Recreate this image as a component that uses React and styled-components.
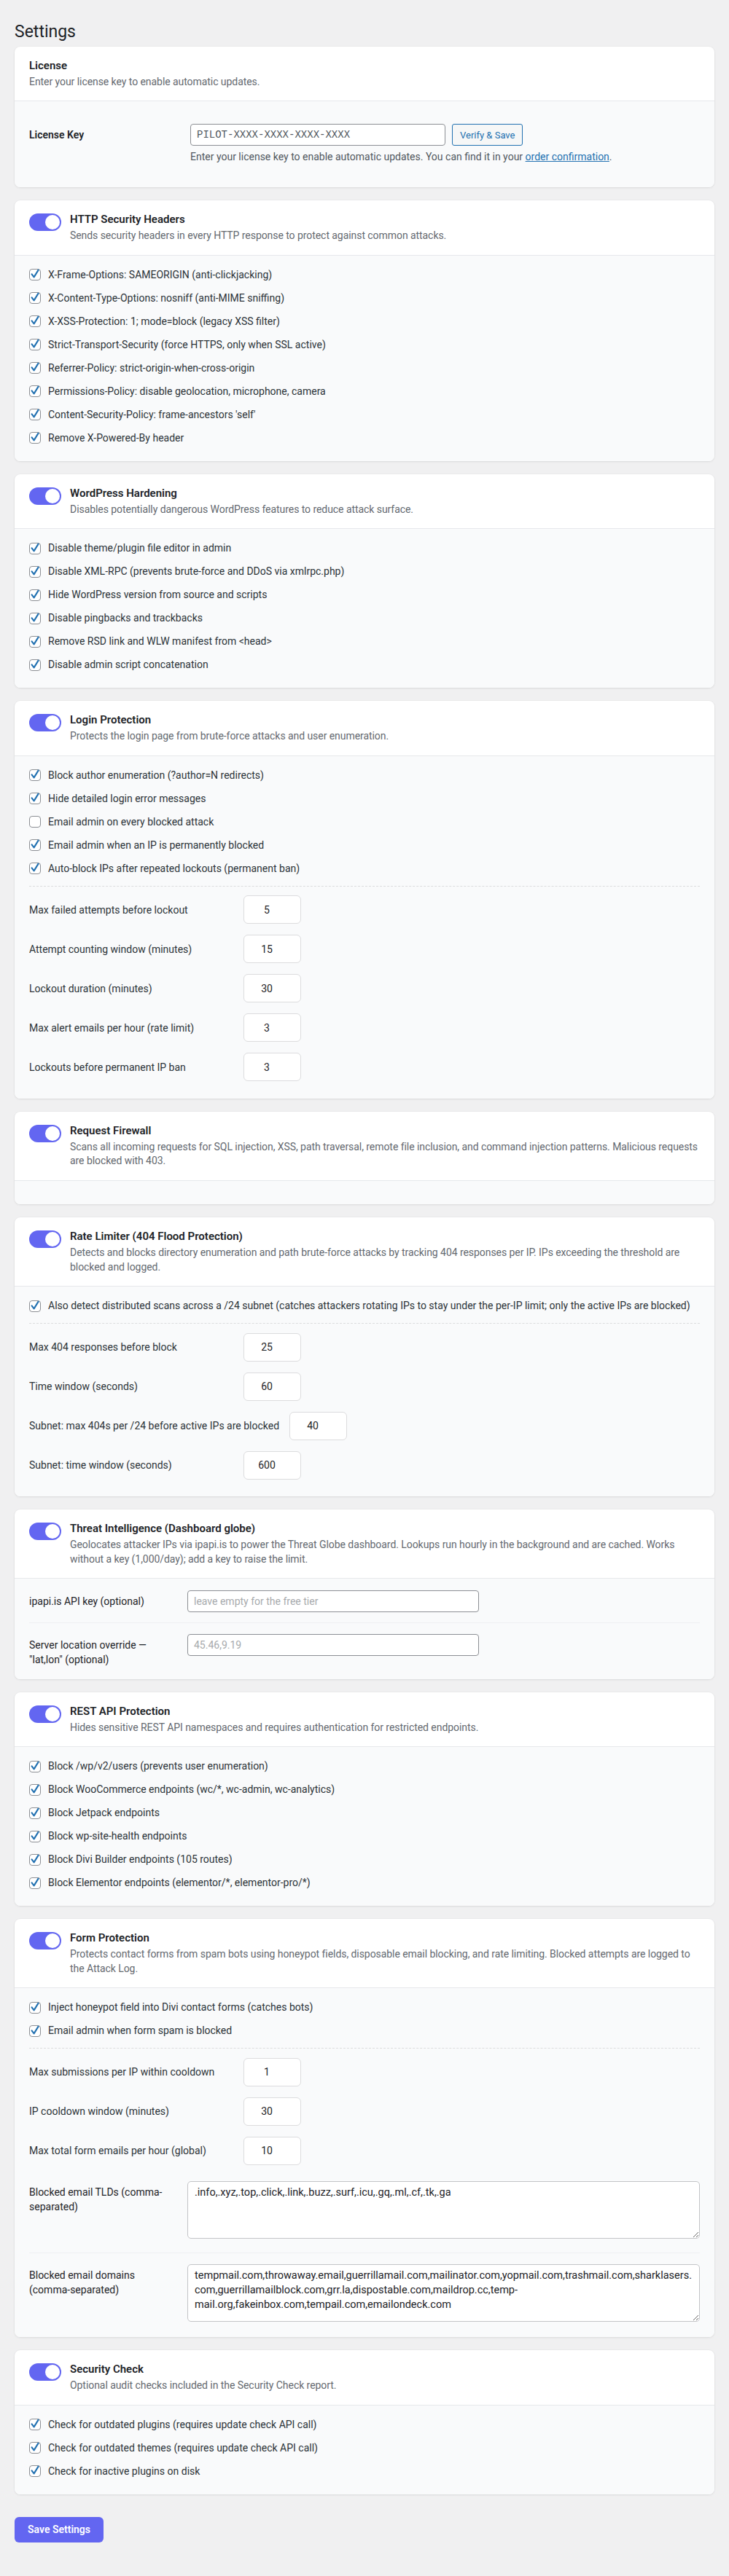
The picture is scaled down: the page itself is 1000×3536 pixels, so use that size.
import React from "react";
import styled, { createGlobalStyle } from "styled-components";

const GlobalStyle = createGlobalStyle`
  html, body {
    margin: 0;
    background: #f0f0f1;
  }
  body {
    font-family: Roboto, "Noto Sans", "Liberation Sans", sans-serif;
    color: #1d2327;
    font-size: 13px;
  }
  * {
    box-sizing: border-box;
  }
`;

const Wrap = styled.div`
  padding: 20px 20px 45px;
`;

const PageTitle = styled.h1`
  margin: 0;
  padding: 9px 0 5px;
  font-size: 23px;
  font-weight: 400;
  line-height: 1.3;
  color: #1d2327;
`;

const CardStack = styled.div`
  display: flex;
  flex-direction: column;
  gap: 18px;
`;

const Card = styled.section`
  background: #fff;
  border-radius: 8px;
  overflow: hidden;
  box-shadow: 0 1px 3px rgba(0, 0, 0, 0.08), 0 0 0 1px rgba(0, 0, 0, 0.02);
`;

const CardHeader = styled.div`
  display: flex;
  align-items: flex-start;
  gap: 12px;
  padding: 16px 20px;
  border-bottom: 1px solid #e6e8eb;
`;

const Toggle = styled.span`
  position: relative;
  flex: none;
  width: 44px;
  height: 24px;
  margin-top: 2px;
  border-radius: 12px;
  background: ${props => (props.on ? "#6366f1" : "#c3c4c7")};
  &::after {
    content: "";
    position: absolute;
    top: 2px;
    left: ${props => (props.on ? "22px" : "2px")};
    width: 20px;
    height: 20px;
    border-radius: 50%;
    background: #fff;
  }
`;

const HeaderText = styled.div`
  flex: 1;
  min-width: 0;
`;

const Title = styled.h2`
  margin: 0;
  font-size: 15px;
  font-weight: 600;
  line-height: 20px;
  color: #1d2327;
`;

const Desc = styled.p`
  margin: 3px 0 0;
  font-size: 14px;
  line-height: 1.4;
  letter-spacing: -0.06px;
  color: #646970;
`;

const CardBody = styled.div`
  background: #f9fafb;
  padding: 16px 20px;
`;

const CheckList = styled.div`
  display: flex;
  flex-direction: column;
  gap: 11px;
  padding-bottom: 5px;
`;

const CheckRow = styled.label`
  display: flex;
  align-items: center;
  gap: 10px;
  font-size: 14px;
  line-height: 21px;
  color: #2c3338;
`;

const Box = styled.span`
  flex: none;
  width: 16px;
  height: 16px;
  border: 1px solid #8c8f94;
  border-radius: 4px;
  background: #fff;
  display: flex;
  align-items: center;
  justify-content: center;
  svg {
    display: block;
    margin-top: -2px;
  }
`;

const DashedRule = styled.hr`
  margin: 8px 0 5px;
  border: 0;
  border-top: 1px dashed #dcdcde;
`;

const NumberRow = styled.div`
  display: flex;
  align-items: center;
  gap: 14px;
  padding: 7.5px 0;
`;

const NumberLabel = styled.span`
  min-width: 280px;
  font-size: 14px;
  line-height: 20px;
  color: #2c3338;
`;

const NumberInput = styled.input`
  width: 79px;
  height: 39px;
  padding: 0 23px 0 8px;
  border: 1px solid #dcdcde;
  border-radius: 6px;
  background: #fff;
  text-align: center;
  font: 14px Roboto, "Noto Sans", sans-serif;
  color: #1d2327;
`;

const FieldRow = styled.div`
  display: grid;
  grid-template-columns: 200px 1fr;
  column-gap: 17px;
  padding: 15px 0 14px;
  border-bottom: 1px solid #eef0f2;
  &:first-child {
    padding-top: 0;
  }
  &:last-child {
    border-bottom: none;
    padding-bottom: 0;
  }
`;

const FieldLabel = styled.label`
  padding-top: 6px;
  font-size: 14px;
  line-height: 1.4;
  color: #1d2327;
`;

const TextInput = styled.input`
  width: 400px;
  height: 30px;
  padding: 0 8px;
  border: 1px solid #8c8f94;
  border-radius: 4px;
  background: #fff;
  font: 14px Roboto, "Noto Sans", sans-serif;
  color: #2c3338;
  &::placeholder {
    color: #a7aaad;
  }
`;

const TextArea = styled.textarea`
  display: block;
  width: 100%;
  height: 79px;
  margin-bottom: 5px;
  padding: 5px 8px 5px 9px;
  border: 1px solid #c3c4c7;
  border-radius: 5px;
  background: #fff;
  font: 14.5px/20px Roboto, "Noto Sans", sans-serif;
  color: #1d2327;
`;

const LicenseRow = styled.div`
  display: grid;
  grid-template-columns: 221px 1fr;
  padding: 15px 0;
`;

const LicenseLabel = styled.label`
  padding-top: 5px;
  font-size: 14px;
  font-weight: 600;
  line-height: 20px;
  color: #1d2327;
`;

const InlineGroup = styled.div`
  display: flex;
  gap: 9px;
`;

const LicenseInput = styled.input`
  width: 350px;
  height: 30px;
  padding: 0 8px;
  border: 1px solid #8c8f94;
  border-radius: 4px;
  background: #fff;
  font: 14px "Liberation Mono", "DejaVu Sans Mono", monospace;
  color: #50575e;
  &::placeholder {
    color: #50575e;
  }
`;

const SecondaryButton = styled.button`
  height: 30px;
  padding: 0 10px;
  border: 1px solid #2271b1;
  border-radius: 3px;
  background: #f6f7f7;
  color: #2271b1;
  font: 13px Roboto, "Noto Sans", sans-serif;
  cursor: pointer;
`;

const Help = styled.p`
  margin: 6px 0 0;
  font-size: 14px;
  line-height: 1.4;
  color: #50575e;
  a {
    color: #2271b1;
  }
`;

const SaveButton = styled.button`
  margin-top: 31px;
  height: 35px;
  padding: 0 18px;
  border: none;
  border-radius: 6px;
  background: #6366f1;
  color: #fff;
  font: 600 14px Roboto, "Noto Sans", sans-serif;
  cursor: pointer;
`;

const CheckMark = () => (
  <svg width="14" height="14" viewBox="0 0 14 14">
    <path
      d="M2.6 7.4 L5.6 11.4 L11.6 1.6"
      fill="none"
      stroke="#2271b1"
      strokeWidth="2.1"
      strokeLinecap="round"
      strokeLinejoin="round"
    />
  </svg>
);

const Check = ({ label, checked = true }) => (
  <CheckRow>
    <Box>{checked && <CheckMark />}</Box>
    {label}
  </CheckRow>
);

const sections = [
  {
    title: "HTTP Security Headers",
    desc: "Sends security headers in every HTTP response to protect against common attacks.",
    checks: [
      "X-Frame-Options: SAMEORIGIN (anti-clickjacking)",
      "X-Content-Type-Options: nosniff (anti-MIME sniffing)",
      "X-XSS-Protection: 1; mode=block (legacy XSS filter)",
      "Strict-Transport-Security (force HTTPS, only when SSL active)",
      "Referrer-Policy: strict-origin-when-cross-origin",
      "Permissions-Policy: disable geolocation, microphone, camera",
      "Content-Security-Policy: frame-ancestors 'self'",
      "Remove X-Powered-By header"
    ]
  },
  {
    title: "WordPress Hardening",
    desc: "Disables potentially dangerous WordPress features to reduce attack surface.",
    checks: [
      "Disable theme/plugin file editor in admin",
      "Disable XML-RPC (prevents brute-force and DDoS via xmlrpc.php)",
      "Hide WordPress version from source and scripts",
      "Disable pingbacks and trackbacks",
      "Remove RSD link and WLW manifest from <head>",
      "Disable admin script concatenation"
    ]
  },
  {
    title: "Login Protection",
    desc: "Protects the login page from brute-force attacks and user enumeration.",
    checks: [
      "Block author enumeration (?author=N redirects)",
      "Hide detailed login error messages",
      ["Email admin on every blocked attack", false],
      "Email admin when an IP is permanently blocked",
      "Auto-block IPs after repeated lockouts (permanent ban)"
    ],
    numbers: [
      ["Max failed attempts before lockout", "5"],
      ["Attempt counting window (minutes)", "15"],
      ["Lockout duration (minutes)", "30"],
      ["Max alert emails per hour (rate limit)", "3"],
      ["Lockouts before permanent IP ban", "3"]
    ]
  },
  {
    title: "Request Firewall",
    desc: "Scans all incoming requests for SQL injection, XSS, path traversal, remote file inclusion, and command injection patterns. Malicious requests are blocked with 403."
  },
  {
    title: "Rate Limiter (404 Flood Protection)",
    desc: "Detects and blocks directory enumeration and path brute-force attacks by tracking 404 responses per IP. IPs exceeding the threshold are blocked and logged.",
    checks: [
      "Also detect distributed scans across a /24 subnet (catches attackers rotating IPs to stay under the per-IP limit; only the active IPs are blocked)"
    ],
    numbers: [
      ["Max 404 responses before block", "25"],
      ["Time window (seconds)", "60"],
      ["Subnet: max 404s per /24 before active IPs are blocked", "40"],
      ["Subnet: time window (seconds)", "600"]
    ]
  },
  {
    title: "Threat Intelligence (Dashboard globe)",
    desc: "Geolocates attacker IPs via ipapi.is to power the Threat Globe dashboard. Lookups run hourly in the background and are cached. Works without a key (1,000/day); add a key to raise the limit.",
    fields: [
      { label: "ipapi.is API key (optional)", placeholder: "leave empty for the free tier" },
      { label: "Server location override — \"lat,lon\" (optional)", placeholder: "45.46,9.19" }
    ]
  },
  {
    title: "REST API Protection",
    desc: "Hides sensitive REST API namespaces and requires authentication for restricted endpoints.",
    checks: [
      "Block /wp/v2/users (prevents user enumeration)",
      "Block WooCommerce endpoints (wc/*, wc-admin, wc-analytics)",
      "Block Jetpack endpoints",
      "Block wp-site-health endpoints",
      "Block Divi Builder endpoints (105 routes)",
      "Block Elementor endpoints (elementor/*, elementor-pro/*)"
    ]
  },
  {
    title: "Form Protection",
    desc: "Protects contact forms from spam bots using honeypot fields, disposable email blocking, and rate limiting. Blocked attempts are logged to the Attack Log.",
    checks: [
      "Inject honeypot field into Divi contact forms (catches bots)",
      "Email admin when form spam is blocked"
    ],
    numbers: [
      ["Max submissions per IP within cooldown", "1"],
      ["IP cooldown window (minutes)", "30"],
      ["Max total form emails per hour (global)", "10"]
    ],
    areas: [
      { label: "Blocked email TLDs (comma-separated)", value: ".info,.xyz,.top,.click,.link,.buzz,.surf,.icu,.gq,.ml,.cf,.tk,.ga" },
      {
        label: "Blocked email domains (comma-separated)",
        value:
          "tempmail.com,throwaway.email,guerrillamail.com,mailinator.com,yopmail.com,trashmail.com,sharklasers.com,guerrillamailblock.com,grr.la,dispostable.com,maildrop.cc,temp-mail.org,fakeinbox.com,tempail.com,emailondeck.com"
      }
    ]
  },
  {
    title: "Security Check",
    desc: "Optional audit checks included in the Security Check report.",
    checks: [
      "Check for outdated plugins (requires update check API call)",
      "Check for outdated themes (requires update check API call)",
      "Check for inactive plugins on disk"
    ]
  }
];

const Section = ({ title, desc, checks, numbers, fields, areas }) => (
  <Card>
    <CardHeader>
      <Toggle on />
      <HeaderText>
        <Title>{title}</Title>
        <Desc>{desc}</Desc>
      </HeaderText>
    </CardHeader>
    <CardBody>
      {checks && (
        <CheckList>
          {checks.map(c =>
            Array.isArray(c) ? (
              <Check key={c[0]} label={c[0]} checked={c[1]} />
            ) : (
              <Check key={c} label={c} />
            )
          )}
        </CheckList>
      )}
      {checks && (numbers || fields) && <DashedRule />}
      {(numbers || fields || areas) && (
        <div>
          {numbers &&
            numbers.map(([label, value]) => (
              <NumberRow key={label}>
                <NumberLabel>{label}</NumberLabel>
                <NumberInput type="text" defaultValue={value} />
              </NumberRow>
            ))}
          {fields &&
            fields.map(f => (
              <FieldRow key={f.label}>
                <FieldLabel>{f.label}</FieldLabel>
                <div>
                  <TextInput type="text" placeholder={f.placeholder} />
                </div>
              </FieldRow>
            ))}
          {areas &&
            areas.map(a => (
              <FieldRow key={a.label}>
                <FieldLabel>{a.label}</FieldLabel>
                <TextArea defaultValue={a.value} />
              </FieldRow>
            ))}
        </div>
      )}
    </CardBody>
  </Card>
);

const App = () => (
  <Wrap>
    <GlobalStyle />
    <PageTitle>Settings</PageTitle>
    <CardStack>
      <Card>
        <CardHeader>
          <HeaderText>
            <Title>License</Title>
            <Desc>Enter your license key to enable automatic updates.</Desc>
          </HeaderText>
        </CardHeader>
        <CardBody>
          <LicenseRow>
            <LicenseLabel>License Key</LicenseLabel>
            <div>
              <InlineGroup>
                <LicenseInput type="text" placeholder="PILOT-XXXX-XXXX-XXXX-XXXX" />
                <SecondaryButton>Verify &amp; Save</SecondaryButton>
              </InlineGroup>
              <Help>
                Enter your license key to enable automatic updates. You can find it in your{" "}
                <a href="#order">order confirmation</a>.
              </Help>
            </div>
          </LicenseRow>
        </CardBody>
      </Card>
      {sections.map(s => (
        <Section key={s.title} {...s} />
      ))}
    </CardStack>
    <SaveButton>Save Settings</SaveButton>
  </Wrap>
);

export default App;
